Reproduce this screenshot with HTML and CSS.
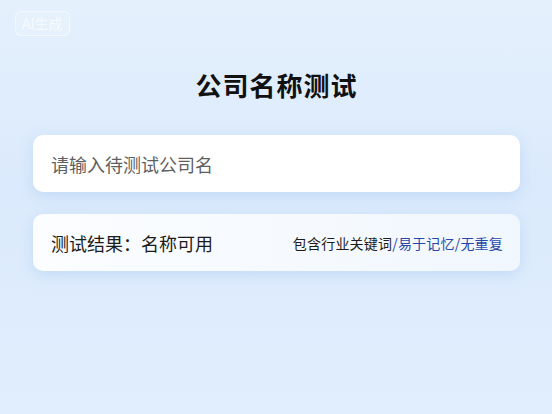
FILE: index.html
```html
<!DOCTYPE html>
<html lang="zh-CN">
<head>
    <meta charset="UTF-8">
    <meta name="viewport" content="width=device-width, initial-scale=1.0">
    <title>公司名称测试</title>
    <link rel="stylesheet" href="styles.css">
</head>
<body>
    <div class="ai-badge">AI生成</div>
    <div class="container">
        <h1>公司名称测试</h1>
        <div class="card input-card">
            <input type="text" id="nameInput" placeholder="请输入待测试公司名">
        </div>
        <div class="card result-card">
            <p class="result">测试结果：名称可用</p>
            <p class="tags">包含行业关键词<span class="blue">/易于记忆/无重复</span></p>
        </div>
    </div>
</body>
</html>
```

FILE: styles.css
```css
body {
    font-family: "Noto Sans CJK SC", "Noto Sans", sans-serif;
    margin: 0;
    min-height: 414px;
    background: linear-gradient(180deg, #e4f0fc 0%, #dbeafc 45%, #e0eefd 100%);
    color: #222;
}
.ai-badge {
    position: absolute;
    top: 11px;
    left: 15px;
    padding: 2px 6px;
    font-size: 14px;
    line-height: 19px;
    color: rgba(255, 255, 255, 0.7);
    border: 1px solid rgba(255, 255, 255, 0.5);
    border-radius: 6px;
    background: rgba(255, 255, 255, 0.12);
}
.container {
    padding: 67px 32px 0 33px;
}
h1 {
    margin: 0 0 32px;
    font-size: 26px;
    line-height: 36px;
    font-weight: 700;
    text-align: center;
    color: #111;
    letter-spacing: 1px;
}
.card {
    height: 57px;
    border-radius: 10px;
    display: flex;
    align-items: center;
    justify-content: space-between;
    padding: 0 17px 0 18px;
    box-shadow: 0 4px 14px rgba(150, 190, 235, 0.35);
}
.input-card {
    background: #fff;
    margin-bottom: 22px;
}
.result-card {
    background: linear-gradient(90deg, #fbfdff 0%, #f1f7fe 100%);
}
input[type="text"] {
    border: none;
    outline: none;
    background: transparent;
    width: 100%;
    padding: 0;
    font-family: inherit;
    font-size: 18px;
    color: #333;
}
input::placeholder {
    color: #5f5f5f;
}
.result {
    margin: 0;
    font-size: 18px;
    color: #1c1c1c;
}
.tags {
    margin: 0;
    font-size: 14px;
    letter-spacing: 0.2px;
    color: #1c1c1c;
}
.blue {
    color: #2747a8;
}
```
